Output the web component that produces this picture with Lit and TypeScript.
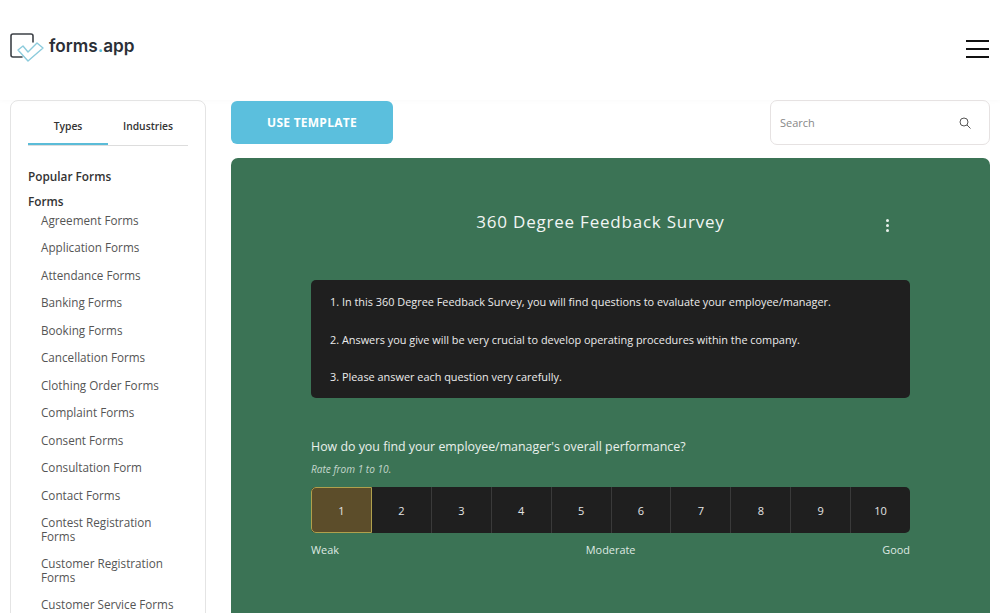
import { LitElement, html, css } from 'lit';
import { customElement } from 'lit/decorators.js';

const FORMS = [
  'Agreement Forms',
  'Application Forms',
  'Attendance Forms',
  'Banking Forms',
  'Booking Forms',
  'Cancellation Forms',
  'Clothing Order Forms',
  'Complaint Forms',
  'Consent Forms',
  'Consultation Form',
  'Contact Forms',
  'Contest Registration Forms',
  'Customer Registration Forms',
  'Customer Service Forms',
];

const NOTES = [
  '1. In this 360 Degree Feedback Survey, you will find questions to evaluate your employee/manager.',
  '2. Answers you give will be very crucial to develop operating procedures within the company.',
  '3. Please answer each question very carefully.',
];

@customElement('app-root')
export class AppRoot extends LitElement {
  static styles = css`
    :host {
      display: block;
      height: 613px;
      overflow: hidden;
      background: #fff;
      font-family: 'Open Sans', sans-serif;
      color: #333;
    }

    .header {
      height: 100px;
      display: flex;
      align-items: center;
      justify-content: space-between;
      padding: 0 11px 6px 10px;
      box-sizing: border-box;
      box-shadow: 0 1px 5px rgba(0, 0, 0, 0.025);
    }

    .logo {
      display: flex;
      align-items: center;
      gap: 4px;
      font-family: Inter, sans-serif;
      font-size: 17.2px;
      font-weight: 600;
      color: #2b2f36;
    }

    .logo span {
      margin-bottom: 3px;
    }

    .logo b {
      color: #5bbcd8;
      font-weight: 600;
    }

    .burger {
      width: 23px;
      margin-top: 4px;
      display: flex;
      flex-direction: column;
      gap: 6px;
    }

    .burger i {
      display: block;
      height: 2px;
      background: #111;
    }

    .page {
      display: flex;
      gap: 25px;
      padding: 0 10px;
      align-items: flex-start;
    }

    .side {
      width: 196px;
      box-sizing: border-box;
      flex: none;
      height: 540px;
      border: 1px solid #e4e4e4;
      border-radius: 8px;
      padding: 8px 17px 0;
    }

    .tabs {
      display: flex;
      border-bottom: 1px solid #ddd;
      height: 36px;
      margin-bottom: 22px;
    }

    .tab {
      width: 80px;
      text-align: center;
      font-size: 10.3px;
      font-weight: 600;
      line-height: 35px;
      height: 36px;
      box-sizing: border-box;
    }

    .tab.on {
      border-bottom: 2px solid #5bbcd8;
    }

    .head {
      font-size: 11.8px;
      font-weight: 600;
      line-height: 17px;
      margin-bottom: 8px;
    }

    .head.forms {
      margin-bottom: 3.5px;
    }

    .item {
      font-size: 11.7px;
      line-height: 13.5px;
      color: #555;
      padding: 0 8px 14px 13px;
    }

    .main {
      flex: 1;
      min-width: 0;
    }

    .bar {
      display: flex;
      justify-content: space-between;
      align-items: flex-start;
      height: 58px;
    }

    .use {
      width: 162px;
      height: 43px;
      margin-top: 1px;
      border-radius: 6px;
      background: #5bbfdd;
      color: #fff;
      font-size: 12px;
      font-weight: 700;
      letter-spacing: 0.25px;
      display: flex;
      align-items: center;
      justify-content: center;
    }

    .search {
      width: 220px;
      height: 45px;
      box-sizing: border-box;
      border: 1px solid #e6e2e2;
      border-radius: 7px;
      display: flex;
      align-items: center;
      justify-content: space-between;
      padding: 0 18px 0 9px;
      font-size: 11px;
      color: #888;
    }

    .card {
      height: 460px;
      background: #3b7355;
      border-radius: 7px 7px 0 0;
      padding: 0 80px;
      color: #e9f0ec;
    }

    .title {
      position: relative;
      height: 122px;
      padding: 51px 20px 0 0;
      box-sizing: border-box;
      text-align: center;
      font-size: 17px;
      font-weight: 500;
      letter-spacing: 0.78px;
      line-height: 26px;
      color: #f2f6f4;
    }

    .kebab {
      position: absolute;
      right: 21px;
      top: 61px;
      display: flex;
      flex-direction: column;
      gap: 2px;
    }

    .kebab i {
      display: block;
      width: 3px;
      height: 3px;
      border-radius: 50%;
      background: #e9f0ec;
    }

    .notes {
      height: 118px;
      box-sizing: border-box;
      background: #1f1f1f;
      border-radius: 5px;
      padding: 14px 19px;
      font-size: 10.9px;
      line-height: 16px;
      color: #ececec;
      display: flex;
      flex-direction: column;
      gap: 21.5px;
    }

    .question {
      margin-top: 40px;
      font-size: 12.4px;
      line-height: 17px;
    }

    .hint {
      margin-top: 8px;
      font-size: 10.1px;
      font-style: italic;
      line-height: 12px;
      color: #c4d6cc;
    }

    .scale {
      margin-top: 12px;
      height: 46px;
      display: flex;
      background: #1f1f1f;
      border-radius: 5px;
    }

    .cell {
      flex: 1;
      display: flex;
      align-items: center;
      justify-content: center;
      font-size: 11px;
      color: #e4e4e4;
      border-left: 1px solid #3a3a3a;
    }

    .cell:first-child {
      flex: none;
      width: 61px;
      box-sizing: border-box;
      border: 1px solid #b0a04c;
      border-radius: 5px 0 0 5px;
      background: #5c4d2a;
    }

    .cell:nth-child(2) {
      border-left: none;
    }

    .labels {
      display: flex;
      justify-content: space-between;
      margin-top: 9px;
      font-size: 10.9px;
      line-height: 15px;
      color: #dfe9e3;
    }
  `;

  render() {
    return html`
      <div class="header">
        <div class="logo">
          <svg width="35" height="34" viewBox="0 0 35 34" fill="none">
            <path d="M12 27H3a2 2 0 0 1-2-2V6a2 2 0 0 1 2-2h18a2 2 0 0 1 2 2v6" stroke="#3d4147" stroke-width="1.6" stroke-linecap="round"/>
            <path d="M8 20l5-4 5 6 9-9 6 5-15 13z" stroke="#8ccbdc" stroke-width="1.4" stroke-linejoin="round"/>
          </svg>
          <span>forms<b>.</b>app</span>
        </div>
        <div class="burger"><i></i><i></i><i></i></div>
      </div>
      <div class="page">
        <div class="side">
          <div class="tabs">
            <div class="tab on">Types</div>
            <div class="tab">Industries</div>
          </div>
          <div class="head">Popular Forms</div>
          <div class="head forms">Forms</div>
          ${FORMS.map((f) => html`<div class="item">${f}</div>`)}
        </div>
        <div class="main">
          <div class="bar">
            <div class="use">USE TEMPLATE</div>
            <div class="search">
              <span>Search</span>
              <svg width="12" height="12" viewBox="0 0 12 12" fill="none" stroke="#555" stroke-width="1">
                <circle cx="5" cy="5" r="4"/>
                <path d="M8 8l3.500 3.500"/>
              </svg>
            </div>
          </div>
          <div class="card">
            <div class="title">
              360 Degree Feedback Survey
              <div class="kebab"><i></i><i></i><i></i></div>
            </div>
            <div class="notes">${NOTES.map((n) => html`<div>${n}</div>`)}</div>
            <div class="question">How do you find your employee/manager's overall performance?</div>
            <div class="hint">Rate from 1 to 10.</div>
            <div class="scale">
              ${[1, 2, 3, 4, 5, 6, 7, 8, 9, 10].map((n) => html`<div class="cell">${n}</div>`)}
            </div>
            <div class="labels"><span>Weak</span><span>Moderate</span><span>Good</span></div>
          </div>
        </div>
      </div>
    `;
  }
}
